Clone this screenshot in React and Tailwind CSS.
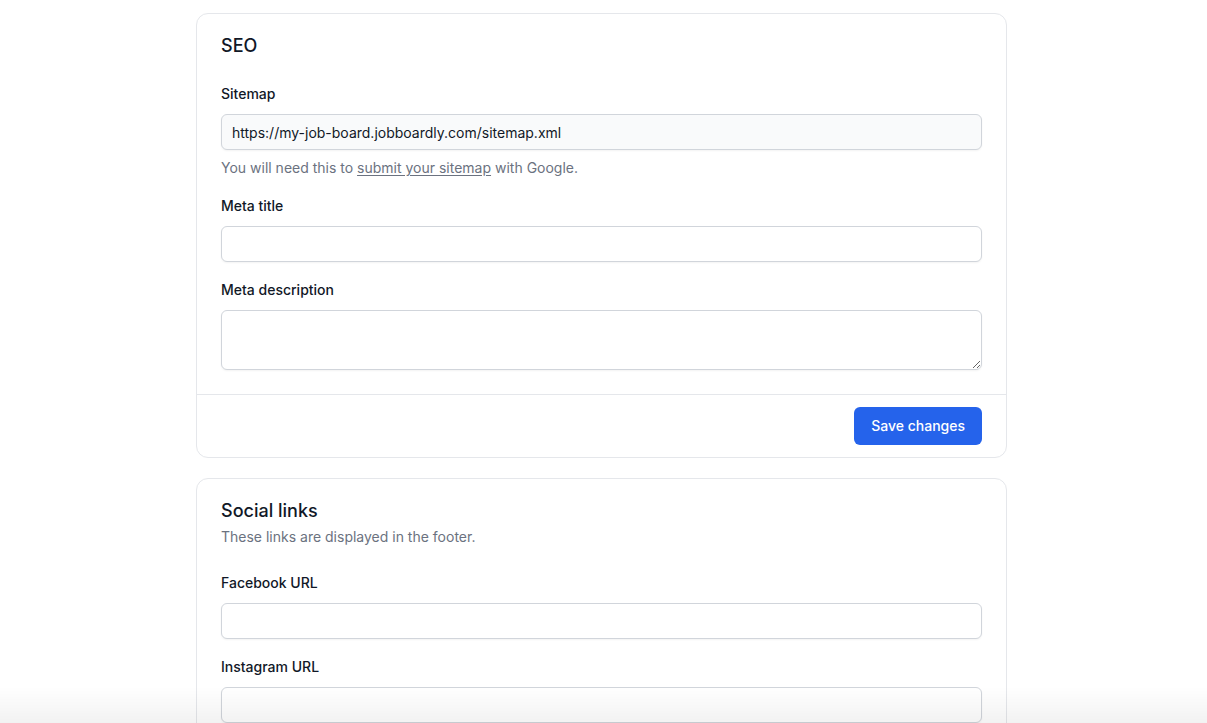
import React from "react";

function Label({ children, className = "" }) {
  return (
    <label className={`block text-sm leading-5 font-medium text-[#111827] ${className}`}>
      {children}
    </label>
  );
}

function Input({ value = "", readOnly = false, className = "" }) {
  return (
    <input
      type="text"
      defaultValue={value}
      readOnly={readOnly}
      className={`mt-[10px] block h-9 w-full rounded-md border border-[#d1d5db] px-2.5 text-sm text-[#111827] shadow-[0_1px_2px_rgba(0,0,0,0.05)] outline-none ${className}`}
    />
  );
}

export default function App() {
  return (
    <div
      className="relative min-h-[723px] bg-white pt-[13px] pl-[196px]"
      style={{ fontFamily: "Inter, 'Noto Sans', sans-serif" }}
    >
      <div className="flex w-[811px] flex-col gap-[20px]">
        {/* SEO card */}
        <div className="rounded-xl border border-[#e5e7eb] bg-white">
          <div className="px-6 pt-[18px] pb-6">
            <h2 className="text-lg leading-7 font-medium text-[#111827]">SEO</h2>
            <div className="mt-6">
              <Label>Sitemap</Label>
              <Input
                value="https://my-job-board.jobboardly.com/sitemap.xml"
                readOnly
                className="bg-[#f9fafb]"
              />
              <p className="mt-2 text-sm leading-5 text-[#6b7280]">
                You will need this to{" "}
                <a href="#" className="text-[#6b7280] underline underline-offset-2">
                  submit your sitemap
                </a>{" "}
                with Google.
              </p>
            </div>
            <div className="mt-[18px]">
              <Label>Meta title</Label>
              <Input className="bg-white" />
            </div>
            <div className="mt-[18px]">
              <Label>Meta description</Label>
              <textarea
                className="mt-[10px] block h-[60px] w-full rounded-md border border-[#d1d5db] bg-white px-2.5 py-2 text-sm text-[#111827] shadow-[0_1px_2px_rgba(0,0,0,0.05)] outline-none"
              />
            </div>
          </div>
          <div className="flex justify-end border-t border-[#e5e7eb] px-6 py-3">
            <button className="h-[38px] rounded-md bg-[#2563eb] px-[17px] text-sm font-medium text-white">
              Save changes
            </button>
          </div>
        </div>

        {/* Social links card */}
        <div className="rounded-xl border border-[#e5e7eb] bg-white">
          <div className="px-6 pt-[18px] pb-6">
            <h2 className="text-lg leading-7 font-medium text-[#111827]">Social links</h2>
            <p className="mt-[2px] text-sm leading-5 text-[#6b7280]">
              These links are displayed in the footer.
            </p>
            <div className="mt-[26px]">
              <Label>Facebook URL</Label>
              <Input className="bg-white" />
            </div>
            <div className="mt-[18px]">
              <Label>Instagram URL</Label>
              <Input className="bg-white" />
            </div>
          </div>
        </div>
      </div>

      <div className="pointer-events-none fixed right-0 bottom-0 left-0 h-[36px] bg-gradient-to-b from-transparent to-[rgba(0,0,0,0.05)]" />
    </div>
  );
}
